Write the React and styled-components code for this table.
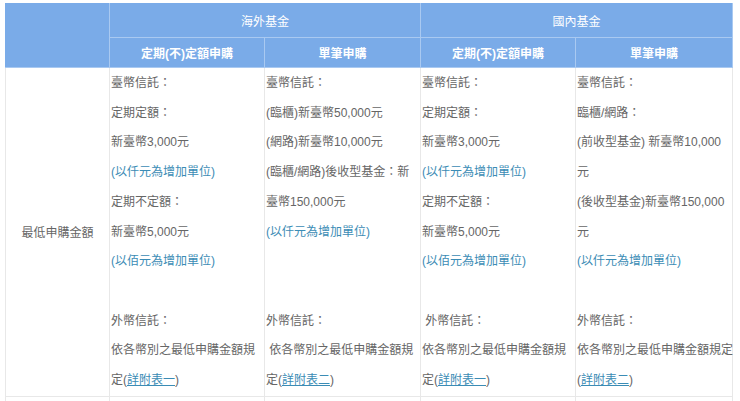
import React from 'react'
import styled, { createGlobalStyle } from 'styled-components'

const GlobalStyle = createGlobalStyle`
  body {
    margin: 0;
    background: #fff;
    font-family: "Liberation Sans", Arial, "Noto Sans CJK TC", sans-serif;
  }
`

const HEAD_BG = '#7aabe8'
const HEAD_LINE = '#a9c9f1'
const BODY_LINE = '#e8e8e8'
const LINK = '#3b8cb5'

const columns = [
  {
    lines: [
      '臺幣信託：',
      '定期定額：',
      '新臺幣3,000元',
      { note: '(以仟元為增加單位)' },
      '定期不定額：',
      '新臺幣5,000元',
      { note: '(以佰元為增加單位)' },
      '',
      '外幣信託：',
      '依各幣別之最低申購金額規',
      { pre: '定(', link: '詳附表一', post: ')' }
    ]
  },
  {
    lines: [
      '臺幣信託：',
      '(臨櫃)新臺幣50,000元',
      '(網路)新臺幣10,000元',
      '(臨櫃/網路)後收型基金：新',
      '臺幣150,000元',
      { note: '(以仟元為增加單位)' },
      '',
      '',
      '外幣信託：',
      '\u00a0依各幣別之最低申購金額規',
      { pre: '定(', link: '詳附表二', post: ')' }
    ]
  },
  {
    lines: [
      '臺幣信託：',
      '定期定額：',
      '新臺幣3,000元',
      { note: '(以仟元為增加單位)' },
      '定期不定額：',
      '新臺幣5,000元',
      { note: '(以佰元為增加單位)' },
      '',
      '\u00a0外幣信託：',
      '依各幣別之最低申購金額規',
      { pre: '定(', link: '詳附表一', post: ')' }
    ]
  },
  {
    lines: [
      '臺幣信託：',
      '臨櫃/網路：',
      '(前收型基金) 新臺幣10,000',
      '元',
      '(後收型基金)新臺幣150,000',
      '元',
      { note: '(以仟元為增加單位)' },
      '',
      '外幣信託：',
      '依各幣別之最低申購金額規定',
      { pre: '(', link: '詳附表二', post: ')' }
    ]
  }
]

const renderLine = (line, i) => {
  if (typeof line === 'string') {
    return <Line key={i}>{line || '\u00a0'}</Line>
  }
  if (line.note) {
    return <Line key={i}><Note>{line.note}</Note></Line>
  }
  return (
    <Line key={i}>
      {line.pre}<Link href="#">{line.link}</Link>{line.post}
    </Line>
  )
}

export default function App() {
  return (
    <>
      <GlobalStyle />
      <Page>
        <Table>
          <colgroup>
            <col style={{ width: 104 }} />
            <col style={{ width: 155 }} />
            <col style={{ width: 156 }} />
            <col style={{ width: 155 }} />
            <col style={{ width: 157 }} />
          </colgroup>
          <thead>
            <tr>
              <HeadCell rowSpan={2} />
              <GroupCell colSpan={2}>海外基金</GroupCell>
              <GroupCell colSpan={2}>國內基金</GroupCell>
            </tr>
            <tr>
              <SubCell>定期(不)定額申購</SubCell>
              <SubCell>單筆申購</SubCell>
              <SubCell>定期(不)定額申購</SubCell>
              <SubCell>單筆申購</SubCell>
            </tr>
          </thead>
          <tbody>
            <tr>
              <LabelCell>最低申購金額</LabelCell>
              {columns.map((c, i) => (
                <BodyCell key={i}>{c.lines.map(renderLine)}</BodyCell>
              ))}
            </tr>
            <tr>
              <LabelCell />
              <BodyCell><Line>&nbsp;</Line></BodyCell>
              <BodyCell><Line>&nbsp;</Line></BodyCell>
              <BodyCell><Line>&nbsp;</Line></BodyCell>
              <BodyCell><Line>&nbsp;</Line></BodyCell>
            </tr>
          </tbody>
        </Table>
      </Page>
    </>
  )
}

const Page = styled.div`
  height: 401px;
  overflow: hidden;
  padding: 3px 0 0 5px;
  box-sizing: border-box;
`
const Table = styled.table`
  width: 727px;
  table-layout: fixed;
  border-collapse: collapse;
  font-size: 12px;
  color: #666;
`
const HeadCell = styled.th`
  background: ${HEAD_BG};
  border: 1px solid ${HEAD_LINE};
  border-top-color: ${HEAD_BG};
  border-left-color: ${HEAD_BG};
  padding: 0;
`
const GroupCell = styled(HeadCell)`
  height: 33px;
  color: #fff;
  font-weight: normal;
  text-align: center;
`
const SubCell = styled(HeadCell)`
  height: 29px;
  color: #fff;
  font-weight: bold;
  text-align: center;
  border-top-color: ${HEAD_LINE};
`
const LabelCell = styled.td`
  border: 1px solid ${BODY_LINE};
  text-align: center;
  vertical-align: middle;
  padding: 0;
`
const BodyCell = styled.td`
  border: 1px solid ${BODY_LINE};
  vertical-align: top;
  padding: 1px 0 0 1px;
`
const Line = styled.div`
  line-height: 29.7px;
  white-space: nowrap;
`
const Note = styled.span`
  color: ${LINK};
`
const Link = styled.a`
  color: ${LINK};
  text-decoration: underline;
`
